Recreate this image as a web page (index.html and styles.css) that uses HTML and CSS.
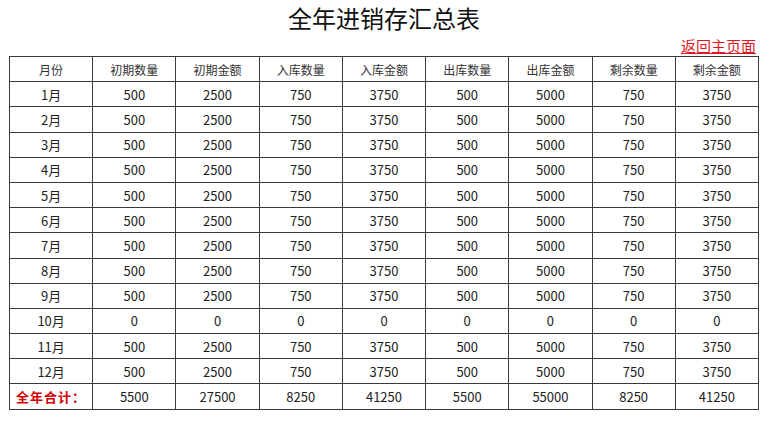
FILE: index.html
```html
<!DOCTYPE html>
<html lang="zh-CN">
<head>
<meta charset="utf-8">
<title>全年进销存汇总表</title>
<link rel="stylesheet" href="styles.css">
</head>
<body>
<div class="page">
  <h1 class="title">全年进销存汇总表</h1>
  <div class="links"><a class="back" href="#">返回主页面</a></div>
  <table class="summary">
    <thead>
      <tr><th>月份</th><th>初期数量</th><th>初期金额</th><th>入库数量</th><th>入库金额</th><th>出库数量</th><th>出库金额</th><th>剩余数量</th><th>剩余金额</th></tr>
    </thead>
    <tbody>
      <tr><td>1月</td><td>500</td><td>2500</td><td>750</td><td>3750</td><td>500</td><td>5000</td><td>750</td><td>3750</td></tr>
      <tr><td>2月</td><td>500</td><td>2500</td><td>750</td><td>3750</td><td>500</td><td>5000</td><td>750</td><td>3750</td></tr>
      <tr><td>3月</td><td>500</td><td>2500</td><td>750</td><td>3750</td><td>500</td><td>5000</td><td>750</td><td>3750</td></tr>
      <tr><td>4月</td><td>500</td><td>2500</td><td>750</td><td>3750</td><td>500</td><td>5000</td><td>750</td><td>3750</td></tr>
      <tr><td>5月</td><td>500</td><td>2500</td><td>750</td><td>3750</td><td>500</td><td>5000</td><td>750</td><td>3750</td></tr>
      <tr><td>6月</td><td>500</td><td>2500</td><td>750</td><td>3750</td><td>500</td><td>5000</td><td>750</td><td>3750</td></tr>
      <tr><td>7月</td><td>500</td><td>2500</td><td>750</td><td>3750</td><td>500</td><td>5000</td><td>750</td><td>3750</td></tr>
      <tr><td>8月</td><td>500</td><td>2500</td><td>750</td><td>3750</td><td>500</td><td>5000</td><td>750</td><td>3750</td></tr>
      <tr><td>9月</td><td>500</td><td>2500</td><td>750</td><td>3750</td><td>500</td><td>5000</td><td>750</td><td>3750</td></tr>
      <tr><td>10月</td><td>0</td><td>0</td><td>0</td><td>0</td><td>0</td><td>0</td><td>0</td><td>0</td></tr>
      <tr><td>11月</td><td>500</td><td>2500</td><td>750</td><td>3750</td><td>500</td><td>5000</td><td>750</td><td>3750</td></tr>
      <tr><td>12月</td><td>500</td><td>2500</td><td>750</td><td>3750</td><td>500</td><td>5000</td><td>750</td><td>3750</td></tr>
      <tr class="total"><td class="total-label">全年合计：</td><td>5500</td><td>27500</td><td>8250</td><td>41250</td><td>5500</td><td>55000</td><td>8250</td><td>41250</td></tr>
    </tbody>
  </table>
</div>
</body>
</html>
```

FILE: styles.css
```css
html, body {
  margin: 0;
  padding: 0;
  background: #fff;
}
body {
  font-family: "Noto Sans CJK SC", "Noto Sans", sans-serif;
  color: #222;
}
.page {
  width: 750px;
  margin-left: 9px;
}
.title {
  margin: 0;
  font-size: 24px;
  font-weight: normal;
  line-height: 36px;
  text-align: center;
  color: #111;
}
.links {
  text-align: right;
  padding-right: 3px;
  line-height: 18px;
  height: 18px;
}
.back {
  color: #e0141e;
  font-size: 15px;
  text-decoration: underline;
}
.summary {
  margin-top: 2px;
  width: 750px;
  border-collapse: collapse;
  table-layout: fixed;
}
.summary tr {
  height: 25.2px;
}
.summary th,
.summary td {
  border: 1px solid #3a3a3a;
  text-align: center;
  padding: 0;
  font-weight: normal;
}
.summary th {
  font-size: 12px;
  color: #333;
}
.summary td {
  font-size: 13px;
  color: #222;
}
.summary .total-label {
  color: #d40000;
  font-weight: bold;
  font-size: 13px;
  letter-spacing: 1px;
}
```
